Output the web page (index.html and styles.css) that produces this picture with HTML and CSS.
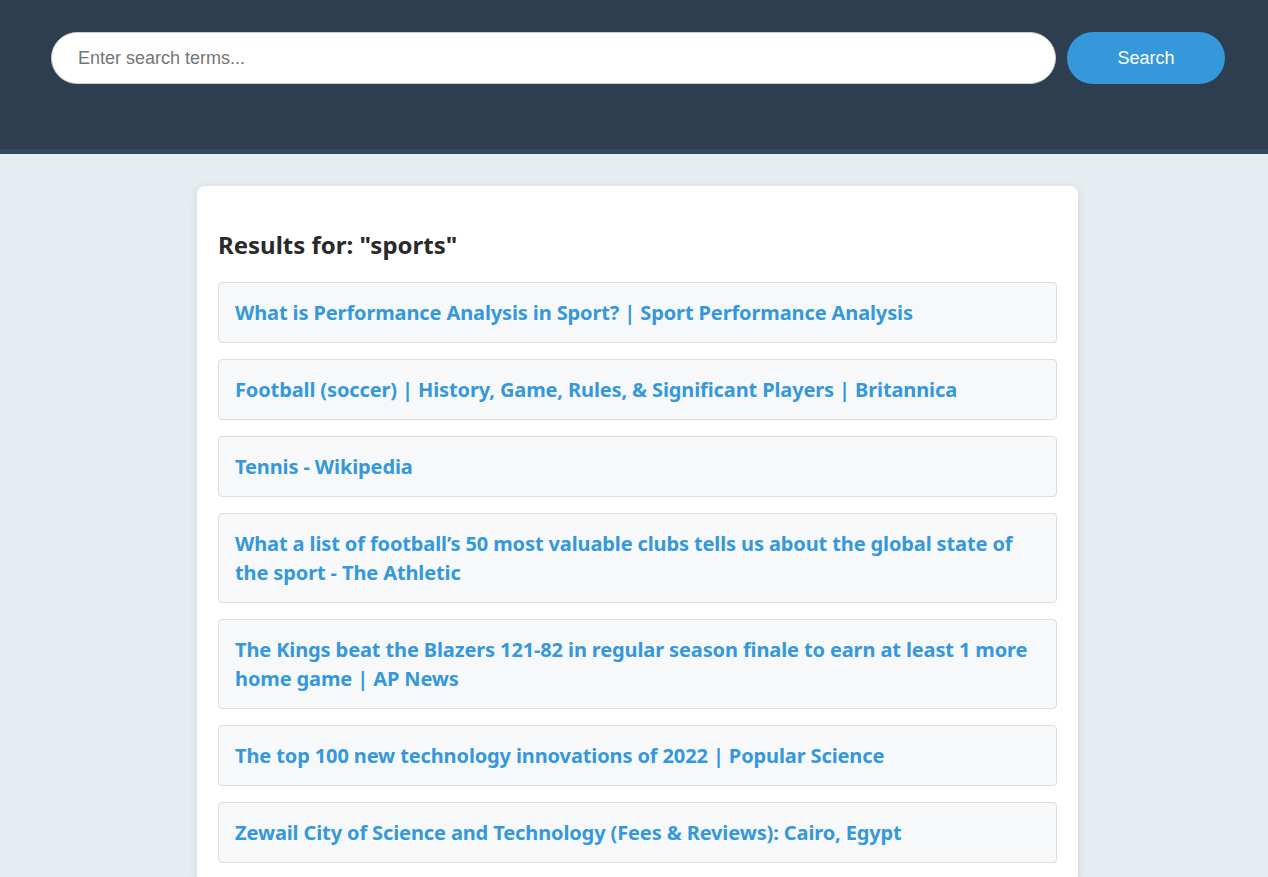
FILE: index.html
```html
<!DOCTYPE html>
<html lang="en">
<head>
<meta charset="utf-8">
<title>Search</title>
<link rel="stylesheet" href="styles.css">
</head>
<body>
<header class="header">
  <form class="search-form">
    <input class="search-input" type="text" placeholder="Enter search terms...">
    <button class="search-button" type="button">Search</button>
  </form>
</header>
<main class="main">
  <section class="card">
    <h2 class="results-title">Results for: "sports"</h2>
    <ul class="results">
      <li class="result"><a href="#">What is Performance Analysis in Sport? | Sport Performance Analysis</a></li>
      <li class="result"><a href="#">Football (soccer) | History, Game, Rules, &amp; Significant Players | Britannica</a></li>
      <li class="result"><a href="#">Tennis - Wikipedia</a></li>
      <li class="result"><a href="#">What a list of football’s 50 most valuable clubs tells us about the global state of the sport - The Athletic</a></li>
      <li class="result"><a href="#">The Kings beat the Blazers 121-82 in regular season finale to earn at least 1 more home game | AP News</a></li>
      <li class="result"><a href="#">The top 100 new technology innovations of 2022 | Popular Science</a></li>
      <li class="result"><a href="#">Zewail City of Science and Technology (Fees &amp; Reviews): Cairo, Egypt</a></li>
    </ul>
  </section>
</main>
</body>
</html>
```
FILE: styles.css
```css
* { box-sizing: border-box; }
html, body { margin: 0; padding: 0; }
body {
  background: #e6edf0;
  font-family: "Noto Sans", "Open Sans", sans-serif;
  color: #333;
}
.header {
  background: #2c3e50;
  height: 154px;
  border-bottom: 5px solid #34495e;
  padding: 32px 43px 0 51px;
}
.search-form {
  display: flex;
  gap: 11px;
}
.search-input {
  flex: 1;
  height: 52px;
  border: 1px solid #ccc;
  border-radius: 26px;
  background: #fff;
  padding: 0 26px;
  font-family: "Liberation Sans", Arial, sans-serif;
  font-size: 18px;
  color: #333;
  outline: none;
}
.search-input::placeholder { color: #757575; }
.search-button {
  width: 158px;
  height: 52px;
  border: none;
  border-radius: 26px;
  background: #3498db;
  color: #fff;
  font-family: "Liberation Sans", Arial, sans-serif;
  font-size: 18px;
  cursor: pointer;
}
.main {
  display: flex;
  justify-content: center;
  padding: 32px 0 0 7px;
}
.card {
  width: 881px;
  background: #fff;
  border-radius: 8px;
  box-shadow: 0 2px 10px rgba(0,0,0,0.1);
  padding: 21px 21px 21px;
}
.results-title {
  margin: 22px 0 21px;
  font-size: 24px;
  line-height: 32px;
  font-weight: 700;
  color: #2a2a2a;
}
.results {
  list-style: none;
  margin: 0;
  padding: 0;
  display: flex;
  flex-direction: column;
  gap: 16px;
}
.result {
  background: #f7f8fa;
  border: 1px solid #ddd;
  border-radius: 4px;
  padding: 15px 16px;
  font-size: 20px;
  line-height: 29px;
  font-weight: 700;
  letter-spacing: -0.12px;
}
.result a {
  color: #3498db;
  text-decoration: none;
}
```
